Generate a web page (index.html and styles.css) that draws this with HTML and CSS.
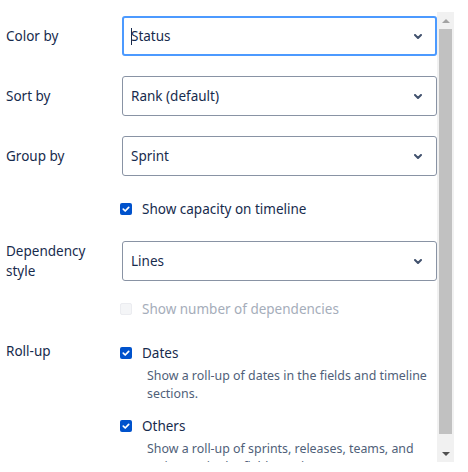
FILE: index.html
```html
<!DOCTYPE html>
<html lang="en">
<head>
<meta charset="utf-8">
<title>View settings</title>
<link rel="stylesheet" href="styles.css">
</head>
<body>
<div class="panel">
  <div class="content">
    <div class="field">
      <div class="label">Color by</div>
      <div class="select focused"><span class="value"><span class="caret"></span>Status</span><svg class="chev" width="8" height="5" viewBox="0 0 8 5"><path d="M1 1 L4 4 L7 1" fill="none" stroke="#42526e" stroke-width="2" stroke-linecap="round" stroke-linejoin="round"/></svg></div>
    </div>
    <div class="field">
      <div class="label">Sort by</div>
      <div class="select"><span class="value">Rank (default)</span><svg class="chev" width="8" height="5" viewBox="0 0 8 5"><path d="M1 1 L4 4 L7 1" fill="none" stroke="#42526e" stroke-width="2" stroke-linecap="round" stroke-linejoin="round"/></svg></div>
    </div>
    <div class="field">
      <div class="label">Group by</div>
      <div class="select"><span class="value">Sprint</span><svg class="chev" width="8" height="5" viewBox="0 0 8 5"><path d="M1 1 L4 4 L7 1" fill="none" stroke="#42526e" stroke-width="2" stroke-linecap="round" stroke-linejoin="round"/></svg></div>
    </div>
    <div class="check-row capacity">
      <span class="box checked"><svg width="12" height="12" viewBox="0 0 12 12"><path d="M3.3 6.2 L5.2 8 L8.7 4.3" fill="none" stroke="#fff" stroke-width="1.7" stroke-linecap="round" stroke-linejoin="round"/></svg></span>
      <span class="check-text">Show capacity on timeline</span>
    </div>
    <div class="field dep">
      <div class="label">Dependency<br>style</div>
      <div class="select"><span class="value">Lines</span><svg class="chev" width="8" height="5" viewBox="0 0 8 5"><path d="M1 1 L4 4 L7 1" fill="none" stroke="#42526e" stroke-width="2" stroke-linecap="round" stroke-linejoin="round"/></svg></div>
    </div>
    <div class="check-row disabled">
      <span class="box"></span>
      <span class="check-text">Show number of dependencies</span>
    </div>
    <div class="field rollup">
      <div class="label">Roll-up</div>
      <div class="options">
        <div class="check-row">
          <span class="box checked"><svg width="12" height="12" viewBox="0 0 12 12"><path d="M3.3 6.2 L5.2 8 L8.7 4.3" fill="none" stroke="#fff" stroke-width="1.7" stroke-linecap="round" stroke-linejoin="round"/></svg></span>
          <span class="check-text">Dates</span>
        </div>
        <div class="desc">Show a roll-up of dates in the fields and timeline<br>sections.</div>
        <div class="check-row others">
          <span class="box checked"><svg width="12" height="12" viewBox="0 0 12 12"><path d="M3.3 6.2 L5.2 8 L8.7 4.3" fill="none" stroke="#fff" stroke-width="1.7" stroke-linecap="round" stroke-linejoin="round"/></svg></span>
          <span class="check-text">Others</span>
        </div>
        <div class="desc">Show a roll-up of sprints, releases, teams, and<br>estimates in the fields section.</div>
      </div>
    </div>
  </div>
  <div class="scrollbar">
    <div class="sb-btn"><span class="arrow-up"></span></div>
    <div class="sb-track"><div class="sb-thumb"></div></div>
    <div class="sb-btn"><span class="arrow-down"></span></div>
  </div>
</div>
</body>
</html>
```

FILE: styles.css
```css
* { box-sizing: border-box; }
html, body { margin: 0; padding: 0; background: #fff; }
body {
  font-family: "Noto Sans", "Open Sans", sans-serif;
  font-size: 13.5px;
  color: #172b4d;
}
.panel {
  margin-top: 12px;
  display: flex;
  width: 454px;
  height: 450px;
}
.content {
  width: 437px;
  flex: none;
  overflow: hidden;
  padding: 4px 0 0 6px;
}
.field {
  display: grid;
  grid-template-columns: 116px 315px;
  align-items: center;
  margin-bottom: 20px;
}
.label {
  line-height: 20px;
  color: #172b4d;
}
.select {
  height: 40px;
  border: 1px solid #8993a4;
  border-radius: 3px;
  display: flex;
  align-items: center;
  justify-content: space-between;
  padding: 0 14px 0 8px;
  background: #fff;
}
.select.focused {
  border: 2px solid #4c9aff;
  padding: 0 13px 0 7px;
}
.value { line-height: 20px; color: #172b4d; }
.caret {
  display: inline-block;
  width: 1px;
  height: 17px;
  background: #172b4d;
  margin-right: -1px;
  vertical-align: -4px;
}
.chev { display: block; }
.check-row {
  display: flex;
  align-items: center;
  height: 26px;
  padding-left: 114px;
}
.options .check-row { padding-left: 0; margin-left: -2px; }
.check-row.capacity { margin-bottom: 19px; }
.field.dep { margin-bottom: 15px; }
.box {
  width: 12px;
  height: 12px;
  border-radius: 2px;
  flex: none;
  background: #f4f5f7;
  border: 1px solid #ebecf0;
  display: flex;
}
.box.checked { background: #0052cc; border: none; }
.box svg { display: block; }
.check-text { margin-left: 10px; line-height: 20px; color: #172b4d; }
.disabled .check-text { color: #a5adba; }
.field.rollup {
  align-items: start;
  margin-top: 18px;
  margin-bottom: 0;
}
.rollup .label { padding-top: 1px; }
.desc {
  padding-left: 25px;
  padding-top: 1px;
  font-size: 12.4px;
  line-height: 18px;
  color: #505f79;
  white-space: nowrap;
}
.check-row.others { margin-top: 10px; }
.scrollbar {
  width: 17px;
  flex: none;
  background: #f1f1f1;
  display: flex;
  flex-direction: column;
}
.sb-btn {
  height: 17px;
  flex: none;
  display: flex;
  align-items: center;
  justify-content: center;
}
.arrow-up {
  width: 0; height: 0;
  border-left: 4px solid transparent;
  border-right: 4px solid transparent;
  border-bottom: 4px solid #a3a3a3;
}
.arrow-down {
  width: 0; height: 0;
  border-left: 4px solid transparent;
  border-right: 4px solid transparent;
  border-top: 4px solid #505050;
}
.sb-track { flex: 1; padding: 0 2px; }
.sb-thumb { height: 405px; background: #c1c1c1; }
```
